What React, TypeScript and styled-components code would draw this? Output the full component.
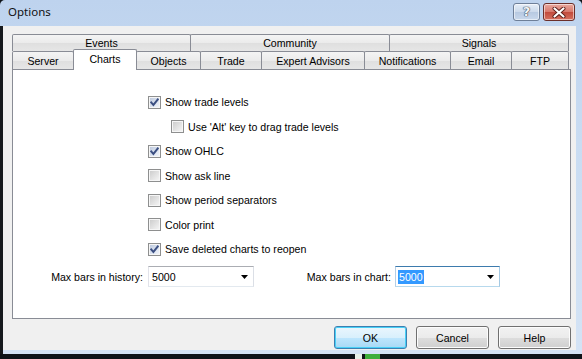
import React from 'react';
import styled, { createGlobalStyle } from 'styled-components';

const Global = createGlobalStyle`
  html, body { margin: 0; padding: 0; background: #0f1419; }
  body { width: 582px; height: 359px; overflow: hidden; }
  * { box-sizing: border-box; }
`;

const Screen = styled.div`
  width: 582px;
  height: 359px;
  display: flex;
  flex-direction: column;
  background: #0f1419;
  font-family: "Liberation Sans", Arial, sans-serif;
  font-size: 10.6px;
  color: #000;
`;

const Window = styled.div`
  width: 582px;
  height: 354px;
  display: flex;
  flex-direction: column;
  background: linear-gradient(to bottom, #bed3ee 0%, #c9dcf2 40%, #d4e3f5 100%);
  border-top-left-radius: 5px;
  border-top-right-radius: 5px;
`;

const TitleBar = styled.div`
  height: 26px;
  flex: none;
  display: flex;
  align-items: flex-start;
  padding: 3px 7px 0 8px;
`;

const Title = styled.div`
  flex: 1;
  font-family: "Noto Sans", "Open Sans", sans-serif;
  font-size: 11.5px;
  line-height: 18px;
  color: #111;
`;

const CaptionButton = styled.div<{ $kind: 'help' | 'close' }>`
  height: 18px;
  width: ${p => (p.$kind === 'help' ? 27 : 32)}px;
  margin-left: ${p => (p.$kind === 'close' ? 3 : 0)}px;
  border: 1px solid ${p => (p.$kind === 'help' ? '#6e7f98' : '#6b2f2a')};
  border-radius: 3px;
  display: flex;
  align-items: center;
  justify-content: center;
  background: ${p =>
    p.$kind === 'help'
      ? 'linear-gradient(to bottom, #e6eef8 0%, #cbd9eb 50%, #b7c9e1 51%, #c9d8ec 100%)'
      : 'linear-gradient(to bottom, #e9a99f 0%, #d7776b 50%, #c24a3c 51%, #d5705f 100%)'};
  box-shadow: inset 0 0 0 1px rgba(255, 255, 255, 0.55);
`;

const HelpGlyph = styled.span`
  font-family: "DejaVu Sans", sans-serif;
  font-weight: bold;
  font-size: 13px;
  line-height: 14px;
  color: #f2f5f9;
  text-shadow: 0 0 1px #3c4656, 0 0 1px #3c4656, 0 0 1px #3c4656;
`;

const FrameBody = styled.div`
  flex: 1;
  display: flex;
  border-left: 3px solid #16191d;
  padding-right: 6px;
  padding-bottom: 4px;
`;

const Client = styled.div`
  flex: 1;
  background: #f0f0f0;
  display: flex;
  flex-direction: column;
  padding: 8px 0 0 9px;
`;

const TabRow = styled.div<{ $height: number }>`
  display: flex;
  align-items: flex-end;
  height: ${p => p.$height}px;
  width: 557px;
`;

const Tab = styled.div<{ $w: number; $selected?: boolean }>`
  flex: none;
  width: ${p => p.$w}px;
  height: ${p => (p.$selected ? '21px' : '100%')};
  margin-left: -1px;
  margin-top: ${p => (p.$selected ? -2 : 0)}px;
  margin-bottom: ${p => (p.$selected ? -1 : 0)}px;
  z-index: ${p => (p.$selected ? 2 : 1)};
  &:first-child { margin-left: 0; }
  border: 1px solid #898c95;
  border-bottom: none;
  border-radius: 2px 2px 0 0;
  background: ${p =>
    p.$selected ? '#ffffff' : 'linear-gradient(to bottom, #f4f4f4 0%, #ebebeb 50%, #dfdfdf 51%, #e6e6e6 100%)'};
  display: flex;
  justify-content: center;
  align-items: ${p => (p.$selected ? 'flex-start' : 'center')};
  padding-top: ${p => (p.$selected ? 2 : 0)}px;
  line-height: 14px;
  white-space: nowrap;
`;

const Panel = styled.div`
  width: 559px;
  height: 250px;
  flex: none;
  background: #fff;
  border: 1px solid #898c95;
  display: flex;
  flex-direction: column;
  padding: 24px 0 0 0;
`;

const CheckList = styled.div`
  display: flex;
  flex-direction: column;
  gap: 8.5px;
  margin-left: 135px;
`;

const CheckRow = styled.label<{ $indent?: boolean }>`
  display: flex;
  align-items: center;
  height: 16px;
  gap: 4px;
  margin-left: ${p => (p.$indent ? 23 : 0)}px;
  white-space: nowrap;
`;

const Box = styled.span<{ $checked?: boolean }>`
  width: 13px;
  height: 13px;
  flex: none;
  border: 1px solid #8e8f8f;
  box-shadow: inset 0 0 0 1px #f6f6f6;
  background: ${p =>
    p.$checked
      ? 'linear-gradient(135deg, #b8c4da 0%, #dde4f0 55%, #f3f6fb 100%)'
      : 'linear-gradient(135deg, #c9c9c9 0%, #e3e3e3 55%, #f7f7f7 100%)'};
  display: flex;
  align-items: center;
  justify-content: center;
`;

const ComboRow = styled.div`
  display: flex;
  align-items: center;
  margin-top: 9px;
  height: 21px;
`;

const FieldLabel = styled.span<{ $w: number }>`
  width: ${p => p.$w}px;
  text-align: right;
  white-space: nowrap;
  flex: none;
`;

const Combo = styled.div<{ $focused?: boolean }>`
  width: ${p => (p.$focused ? 105 : 106)}px;
  height: 21px;
  margin-left: ${p => (p.$focused ? 4 : 5)}px;
  flex: none;
  background: #fff;
  border: 1px solid;
  border-color: ${p =>
    p.$focused ? '#3d7bad #a4c9e3 #b7d9ed #b5cfe7' : '#abadb3 #dbdfe6 #e3e9ef #e2e3ea'};
  display: flex;
  align-items: center;
  padding: 0 5px 0 2px;
`;

const ComboText = styled.span`
  flex: 1;
  display: flex;
`;

const ComboValue = styled.span<{ $selected?: boolean }>`
  padding: 0 1px;
  line-height: 14px;
  background: ${p => (p.$selected ? '#3399ff' : 'transparent')};
  color: ${p => (p.$selected ? '#fff' : '#000')};
`;

const ButtonRow = styled.div`
  display: flex;
  justify-content: flex-end;
  gap: 9px;
  margin-top: 7px;
  padding-right: 5px;
`;

const Button = styled.div<{ $default?: boolean }>`
  width: 73px;
  height: 23px;
  border: 1px solid ${p => (p.$default ? '#3c7fb1' : '#707070')};
  border-radius: 3px;
  display: flex;
  align-items: center;
  justify-content: center;
  background: ${p =>
    p.$default
      ? 'linear-gradient(to bottom, #eaf6fd 0%, #d9f0fc 50%, #bee6fd 51%, #a7d9f5 100%)'
      : 'linear-gradient(to bottom, #f2f2f2 0%, #ebebeb 50%, #dddddd 51%, #cfcfcf 100%)'};
  box-shadow: inset 0 0 0 1px ${p => (p.$default ? '#48d0f6' : '#fcfcfc')};
`;

const Taskbar = styled.div`
  flex: 1;
  display: flex;
  align-items: flex-start;
  padding-left: 355px;
  gap: 3px;
`;

const TrayBit = styled.span<{ $c: string; $w: number }>`
  width: ${p => p.$w}px;
  height: 5px;
  background: ${p => p.$c};
`;

const Check = () => (
  <svg width="9" height="9" viewBox="0 0 9 9">
    <path d="M1.2 4.4 L3.4 6.9 L7.8 1.4" fill="none" stroke="#3b4f82" strokeWidth="1.9" strokeLinecap="square" />
  </svg>
);

const Arrow = () => (
  <svg width="7" height="4" viewBox="0 0 7 4">
    <path d="M0 0 H7 L3.5 4 Z" fill="#000" />
  </svg>
);

const CloseX = () => (
  <svg width="14" height="11" viewBox="0 0 14 11">
    <path d="M2.5 1.5 L11.5 9.5 M11.5 1.5 L2.5 9.5" stroke="#5a1d17" strokeWidth="4" strokeLinecap="round" />
    <path d="M2.5 1.5 L11.5 9.5 M11.5 1.5 L2.5 9.5" stroke="#ffffff" strokeWidth="2.2" strokeLinecap="round" />
  </svg>
);

const row1 = [
  { label: 'Events', w: 179 },
  { label: 'Community', w: 200 },
  { label: 'Signals', w: 180 },
];

const row2 = [
  { label: 'Server', w: 62 },
  { label: 'Charts', w: 64, selected: true },
  { label: 'Objects', w: 65 },
  { label: 'Trade', w: 62 },
  { label: 'Expert Advisors', w: 104 },
  { label: 'Notifications', w: 87 },
  { label: 'Email', w: 62 },
  { label: 'FTP', w: 58 },
];

const checks = [
  { label: 'Show trade levels', checked: true },
  { label: "Use 'Alt' key to drag trade levels", checked: false, indent: true },
  { label: 'Show OHLC', checked: true },
  { label: 'Show ask line', checked: false },
  { label: 'Show period separators', checked: false },
  { label: 'Color print', checked: false },
  { label: 'Save deleted charts to reopen', checked: true },
];

export default function App() {
  return (
    <Screen>
      <Global />
      <Window>
        <TitleBar>
          <Title>Options</Title>
          <CaptionButton $kind="help">
            <HelpGlyph>?</HelpGlyph>
          </CaptionButton>
          <CaptionButton $kind="close">
            <CloseX />
          </CaptionButton>
        </TitleBar>
        <FrameBody>
          <Client>
            <TabRow $height={17}>
              {row1.map(t => (
                <Tab key={t.label} $w={t.w}>
                  {t.label}
                </Tab>
              ))}
            </TabRow>
            <TabRow $height={18}>
              {row2.map(t => (
                <Tab key={t.label} $w={t.w} $selected={t.selected}>
                  {t.label}
                </Tab>
              ))}
            </TabRow>
            <Panel>
              <CheckList>
                {checks.map(c => (
                  <CheckRow key={c.label} $indent={c.indent}>
                    <Box $checked={c.checked}>{c.checked && <Check />}</Box>
                    <span>{c.label}</span>
                  </CheckRow>
                ))}
              </CheckList>
              <ComboRow>
                <FieldLabel $w={130}>Max bars in history:</FieldLabel>
                <Combo>
                  <ComboText>
                    <ComboValue>5000</ComboValue>
                  </ComboText>
                  <Arrow />
                </Combo>
                <FieldLabel $w={137}>Max bars in chart:</FieldLabel>
                <Combo $focused>
                  <ComboText>
                    <ComboValue $selected>5000</ComboValue>
                  </ComboText>
                  <Arrow />
                </Combo>
              </ComboRow>
            </Panel>
            <ButtonRow>
              <Button $default>OK</Button>
              <Button>Cancel</Button>
              <Button>Help</Button>
            </ButtonRow>
          </Client>
        </FrameBody>
      </Window>
      <Taskbar>
        <TrayBit $c="#e8f0e8" $w={7} />
        <TrayBit $c="#3fae3a" $w={15} />
      </Taskbar>
    </Screen>
  );
}
